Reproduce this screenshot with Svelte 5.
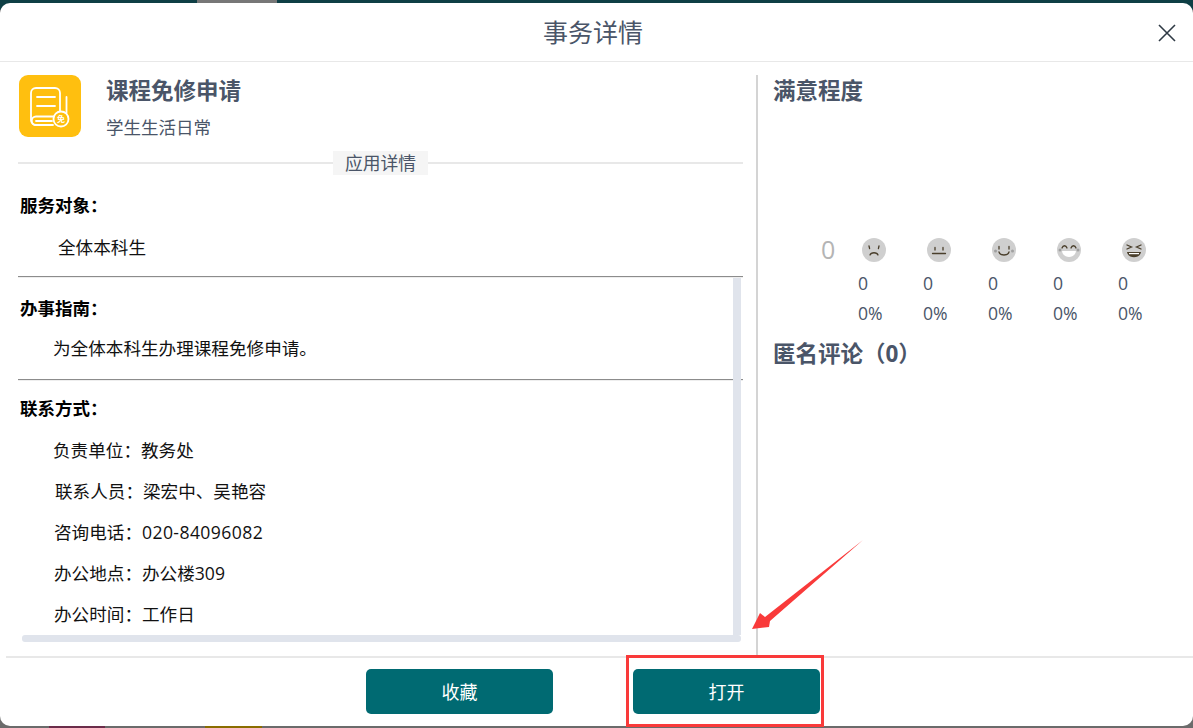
<script lang="ts">
  const contacts = [
    { label: '负责单位：', value: '教务处', pad: 35 },
    { label: '联系人员：', value: '梁宏中、吴艳容', pad: 37 },
    { label: '咨询电话：', value: '020-84096082', pad: 36, wide: true },
    { label: '办公地点：', value: '办公楼309', pad: 36 },
    { label: '办公时间：', value: '工作日', pad: 36 }
  ];
  const ratings = ['sad', 'flat', 'smile', 'grin', 'laugh'];
</script>

<div class="backdrop">
  <i class="peek top-gray"></i>
  <i class="peek maroon"></i>
  <i class="peek olive"></i>
  <div class="modal">
    <header class="head">
      <h1>事务详情</h1>
      <button class="close" aria-label="关闭">
        <svg width="20" height="20" viewBox="0 0 20 20">
          <path d="M2 2 18 18M18 2 2 18" stroke="#2f3a45" stroke-width="1.6" fill="none" />
        </svg>
      </button>
    </header>

    <div class="main">
      <section class="left">
        <div class="app">
          <div class="app-icon">
            <svg width="62" height="62" viewBox="0 0 62 62" fill="none" stroke="#fff" stroke-width="1.800" stroke-linecap="round">
              <path d="M34 50H17a5 5 0 0 1-5-5V18a5 5 0 0 1 5-5h19a5 5 0 0 1 5 5v18" />
              <path d="M18 22h18M18 31h18" />
              <path d="M34 41.500H17a4 4 0 0 0 0 8.500" />
              <path d="M17 46h16" />
              <path d="M47.500 22v16" />
              <circle cx="42" cy="44" r="7.500" />
              <text x="42" y="47" font-size="8" text-anchor="middle" fill="#fff" stroke="none" font-weight="700">免</text>
            </svg>
          </div>
          <div class="app-text">
            <h2>课程免修申请</h2>
            <p>学生生活日常</p>
          </div>
        </div>

        <div class="divider"><span>应用详情</span></div>

        <h3 class="first">服务对象：</h3>
        <p class="target">全体本科生</p>
        <hr />

        <div class="scroll">
          <div class="scroll-body">
            <h3>办事指南：</h3>
            <p class="guide">为全体本科生办理课程免修申请。</p>
            <hr />
            <h3>联系方式：</h3>
            {#each contacts as c}
              <p class="contact" style="padding-left: {c.pad}px"><span>{c.label}</span><span class:wide={c.wide}>{c.value}</span></p>
            {/each}
          </div>
          <div class="bar-v"></div>
          <div class="bar-h"></div>
        </div>
      </section>

      <section class="right">
        <h2>满意程度</h2>
        <div class="stats">
          <div class="score">0</div>
          {#each ratings as r}
            <div class="rate">
              <svg class="face" width="24" height="24" viewBox="0 0 24 24" fill="none" stroke="#4a3f2c" stroke-width="1.300" stroke-linecap="round">
                <circle cx="12" cy="12" r="12" fill="#cfcfcf" stroke="none" />
                {#if r === 'sad'}
                  <path d="M7 8l.6 2.500M17 8l-.6 2.500M8 17c1-3 7-3 8 0" />
                {:else if r === 'flat'}
                  <path d="M8 9.500v2.500M16 9.500v2.500M5.500 15.500h13" />
                {:else if r === 'smile'}
                  <circle cx="3.500" cy="13" r="1.500" fill="#a0a0a0" stroke="none" />
                  <circle cx="20.500" cy="13" r="1.500" fill="#a0a0a0" stroke="none" />
                  <path d="M7 8.500v2.500M17 8.500v2.500M7 14c1 4 9 4 10 0" />
                {:else if r === 'grin'}
                  <circle cx="3" cy="12" r="1.500" fill="#a0a0a0" stroke="none" />
                  <circle cx="21" cy="12" r="1.500" fill="#a0a0a0" stroke="none" />
                  <path d="M5 10c1-3 4-3 5 0M14 10c1-3 4-3 5 0" />
                  <path d="M5 13h14c-1 8-13 8-14 0z" fill="#fff" stroke="none" />
                {:else}
                  <path d="M5 7l4.500 2L5 11M19 7l-4.500 2 4.500 2" />
                  <path d="M5 14h14c-1 7-13 7-14 0z" fill="#4a3f2c" stroke="none" />
                  <path d="M7 15h10v1.200H7z" fill="#fff" stroke="none" />
                {/if}
              </svg>
              <div class="n">0</div>
              <div class="pc">0%</div>
            </div>
          {/each}
        </div>
        <h2 class="comment">匿名评论（0）</h2>
      </section>
    </div>

    <footer class="foot">
      <button class="btn">收藏</button>
      <button class="btn">打开</button>
    </footer>

    <!-- annotation drawn on top of the screenshot -->
    <div class="mark"></div>
    <svg class="arrow" width="120" height="100" viewBox="0 0 120 100">
      <path d="M112 0 19 81 18 87 1 89 9 73 14 77z" fill="#f93a3a" />
    </svg>
  </div>
</div>

<style>
  :global(body) {
    margin: 0;
    font-family: "Open Sans", "Noto Sans CJK SC", sans-serif;
  }
  .backdrop {
    position: relative;
    width: 1193px;
    height: 728px;
    padding-top: 3px;
    box-sizing: border-box;
    overflow: hidden;
    background: linear-gradient(#0e3f45 0 10px, #6b6b6b 10px);
  }
  .peek {
    position: absolute;
  }
  .top-gray {
    left: 197px;
    top: 0;
    width: 80px;
    height: 3px;
    background: #777;
  }
  .maroon {
    left: 49px;
    bottom: 0;
    width: 56px;
    height: 2px;
    background: #6b2d4a;
  }
  .olive {
    left: 205px;
    bottom: 0;
    width: 57px;
    height: 2px;
    background: #8a6d00;
  }
  .modal {
    position: relative;
    height: 723px;
    background: #fff;
    border-radius: 10px;
    display: flex;
    flex-direction: column;
  }
  .head {
    height: 59px;
    flex: none;
    box-sizing: border-box;
    display: flex;
    align-items: center;
    justify-content: center;
    padding: 0 7px 3px 0;
    border-bottom: 1px solid #e8e8e8;
    position: relative;
  }
  .head h1 {
    margin: 0;
    font-size: 25px;
    font-weight: 400;
    color: #4a5568;
  }
  .close {
    position: absolute;
    right: 16px;
    top: 20px;
    padding: 0;
    border: 0;
    background: none;
    display: flex;
  }
  .main {
    flex: 1;
    display: flex;
    margin-left: 6px;
    min-height: 0;
  }
  .left {
    width: 752px;
    flex: none;
    box-sizing: border-box;
    padding: 0 13px 0 12px;
    border-right: 2px solid #d4d4d4;
    margin-top: 13px;
  }
  .app {
    display: flex;
    gap: 25px;
    padding-left: 1px;
  }
  .app-icon {
    width: 62px;
    height: 62px;
    border-radius: 9px;
    background: #ffbf0f;
  }
  .app-text h2 {
    margin: 0;
    font-size: 22.500px;
    line-height: 32px;
    font-weight: 700;
    color: #4a5568;
  }
  .app-text p {
    margin: 8px 0 0;
    font-size: 17.500px;
    line-height: 24px;
    color: #4a5568;
  }
  .divider {
    margin-top: 12px;
    height: 24px;
    display: flex;
    align-items: center;
    justify-content: center;
    background: linear-gradient(#e8e8e8, #e8e8e8) center / 100% 2px no-repeat;
  }
  .divider span {
    background: #f5f5f5;
    font-size: 17.800px;
    line-height: 24px;
    padding: 0 12px;
    color: #4a5568;
  }
  h3 {
    margin: 0;
    font-family: "Liberation Serif", "Noto Sans CJK SC", serif;
    font-size: 17.500px;
    font-weight: 700;
    line-height: 24px;
    color: #000;
    padding-left: 2px;
  }
  h3.first {
    margin-top: 19px;
  }
  hr {
    margin: 0;
    border: 0;
    border-top: 1px solid #8c8c8c;
    border-bottom: 1px solid #eee;
  }
  .target {
    margin: 17px 0 0;
    padding: 0 0 17px 40px;
    font-size: 17.600px;
    line-height: 24px;
    color: #111;
  }
  .scroll {
    position: relative;
    height: 364px;
    overflow: hidden;
  }
  .scroll-body {
    padding-top: 19px;
  }
  .guide {
    margin: 15px 0 0;
    padding: 0 0 19px 35px;
    font-size: 17.600px;
    line-height: 24px;
    color: #111;
  }
  .scroll-body hr + h3 {
    margin-top: 16px;
  }
  .contact {
    margin: 16.600px 0 0;
    font-size: 17.600px;
    line-height: 24.600px;
    color: #111;
  }
  .wide {
    letter-spacing: 0.4px;
  }
  .bar-v {
    position: absolute;
    right: 2px;
    top: 0;
    bottom: 7px;
    width: 8px;
    background: #e0e4ec;
  }
  .bar-h {
    position: absolute;
    left: 4px;
    right: 2px;
    bottom: 0;
    height: 7px;
    border-radius: 3px;
    background: #e0e4ec;
  }
  .right {
    flex: 1;
    padding: 13px 0 0 15px;
  }
  .right h2 {
    margin: 0;
    font-size: 22.500px;
    line-height: 32px;
    font-weight: 700;
    color: #4a5568;
  }
  .stats {
    display: flex;
    align-items: flex-start;
    margin-top: 131px;
    padding-left: 48px;
  }
  .score {
    width: 37px;
    font-size: 25px;
    line-height: 22px;
    color: #b4b4b4;
  }
  .rate {
    width: 65px;
    font-size: 17.600px;
    color: #4a5568;
    line-height: 30px;
  }
  .face {
    display: block;
    margin: 0 0 6px 3.500px;
  }
  .comment {
    margin-top: 10px !important;
  }
  .foot {
    flex: none;
    height: 70px;
    margin-left: 6px;
    border-top: 2px solid #e8e8e8;
    box-sizing: border-box;
    display: flex;
    justify-content: center;
    align-items: flex-start;
    gap: 80px;
    padding: 11px 13px 0 0;
  }
  .btn {
    width: 187px;
    height: 45px;
    border: 0;
    border-radius: 5px;
    padding: 0 0 2px;
    background: #006a72;
    color: #fff;
    font: inherit;
    font-size: 18px;
  }
  .mark {
    position: absolute;
    left: 626px;
    top: 652px;
    width: 198px;
    height: 72px;
    box-sizing: border-box;
    border: 3px solid #f93a3a;
  }
  .arrow {
    position: absolute;
    left: 751px;
    top: 537px;
  }
</style>
